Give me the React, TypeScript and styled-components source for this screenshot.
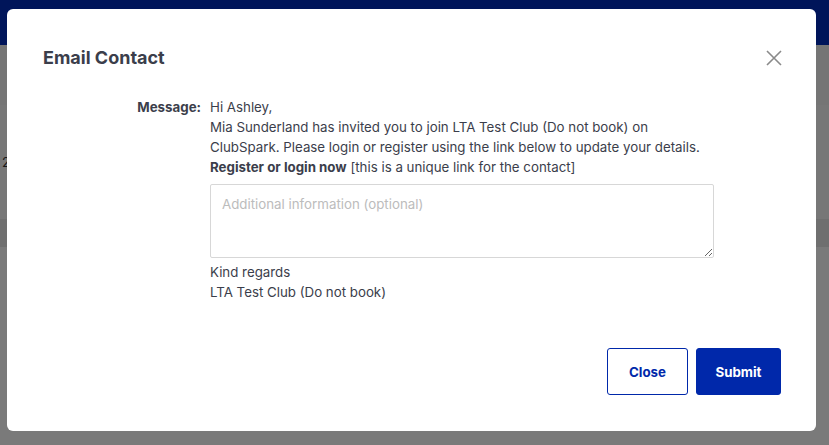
import React from "react";
import styled, { createGlobalStyle } from "styled-components";

const Global = createGlobalStyle`
  html, body { margin: 0; padding: 0; }
  body {
    font-family: Inter, "Noto Sans", Arial, sans-serif;
    background: #efefef;
    width: 829px;
    height: 445px;
    overflow: hidden;
  }
`;

const Page = styled.div`
  width: 829px;
  height: 445px;
  display: flex;
  flex-direction: column;
`;

const TopBar = styled.div`
  height: 45px;
  background: #002bb4;
`;

const Band = styled.div<{ $h: number; $bg: string }>`
  height: ${(p) => p.$h}px;
  background: ${(p) => p.$bg};
  display: flex;
  align-items: center;
  padding-left: 2px;
  font-size: 13px;
  color: #333;
`;

const Backdrop = styled.div`
  position: fixed;
  inset: 0;
  background: rgba(0, 0, 0, 0.5);
  display: flex;
  align-items: flex-start;
  padding: 9px 0 0 7px;
`;

const Modal = styled.div`
  width: 809px;
  height: 422px;
  box-sizing: border-box;
  background: #fff;
  border-radius: 6px;
  padding: 37px 35px 36px 36px;
  display: flex;
  flex-direction: column;
`;

const Header = styled.div`
  display: flex;
  justify-content: space-between;
  align-items: center;
`;

const Title = styled.h2`
  margin: 0;
  font-size: 18px;
  line-height: 24px;
  font-weight: 700;
  color: #3b3e4b;
`;

const CloseX = styled.button`
  border: 0;
  background: none;
  padding: 0;
  margin-right: -1px;
  width: 16px;
  height: 16px;
  display: flex;
  cursor: pointer;
`;

const Body = styled.div`
  display: grid;
  grid-template-columns: 151px 504px;
  column-gap: 9px;
  margin-top: 27px;
  padding-left: 7px;
`;

const Label = styled.div`
  text-align: right;
  font-size: 13.3px;
  line-height: 20px;
  font-weight: 700;
  color: #3b3e4b;
`;

const Content = styled.div`
  font-size: 13.3px;
  line-height: 20px;
  color: #3b3e4b;
`;

const Line = styled.p`
  margin: 0;
`;

const TextArea = styled.textarea`
  display: block;
  box-sizing: border-box;
  width: 504px;
  height: 74px;
  margin: 7px 0 4px;
  padding: 9px 11px;
  border: 1px solid #d7d7d7;
  border-radius: 2px;
  font-family: inherit;
  font-size: 13.3px;
  line-height: 20px;
  color: #333;
  &::placeholder { color: #bcbcbc; }
`;

const Footer = styled.div`
  margin-top: auto;
  display: flex;
  justify-content: flex-end;
  gap: 8px;
`;

const Button = styled.button<{ $primary?: boolean }>`
  height: 47px;
  width: ${(p) => (p.$primary ? 85 : 81)}px;
  box-sizing: border-box;
  border-radius: 3px;
  border: 1px solid #0028aa;
  background: ${(p) => (p.$primary ? "#0028aa" : "#fff")};
  color: ${(p) => (p.$primary ? "#fff" : "#0028aa")};
  font-family: inherit;
  font-size: 13.3px;
  font-weight: 700;
  cursor: pointer;
`;

export default function App() {
  return (
    <>
      <Global />
      <Page>
        <TopBar />
        <Band $h={60} $bg="#ebebeb" />
        <Band $h={114} $bg="#efefef">2</Band>
        <Band $h={28} $bg="#dedede" />
        <Band $h={198} $bg="#f4f4f4" />
      </Page>
      <Backdrop>
        <Modal>
          <Header>
            <Title>Email Contact</Title>
            <CloseX aria-label="Close">
              <svg width="16" height="16" viewBox="0 0 16 16">
                <path d="M1 1 L15 15 M15 1 L1 15" stroke="#8a8a8a" strokeWidth="1.6" />
              </svg>
            </CloseX>
          </Header>
          <Body>
            <Label>Message:</Label>
            <Content>
              <Line>Hi Ashley,</Line>
              <Line>
                Mia Sunderland has invited you to join LTA Test Club (Do not book) on
                ClubSpark. Please login or register using the link below to update your details.
              </Line>
              <Line>
                <b>Register or login now</b> [this is a unique link for the contact]
              </Line>
              <TextArea placeholder="Additional information (optional)" />
              <Line>Kind regards</Line>
              <Line>LTA Test Club (Do not book)</Line>
            </Content>
          </Body>
          <Footer>
            <Button>Close</Button>
            <Button $primary>Submit</Button>
          </Footer>
        </Modal>
      </Backdrop>
    </>
  );
}
